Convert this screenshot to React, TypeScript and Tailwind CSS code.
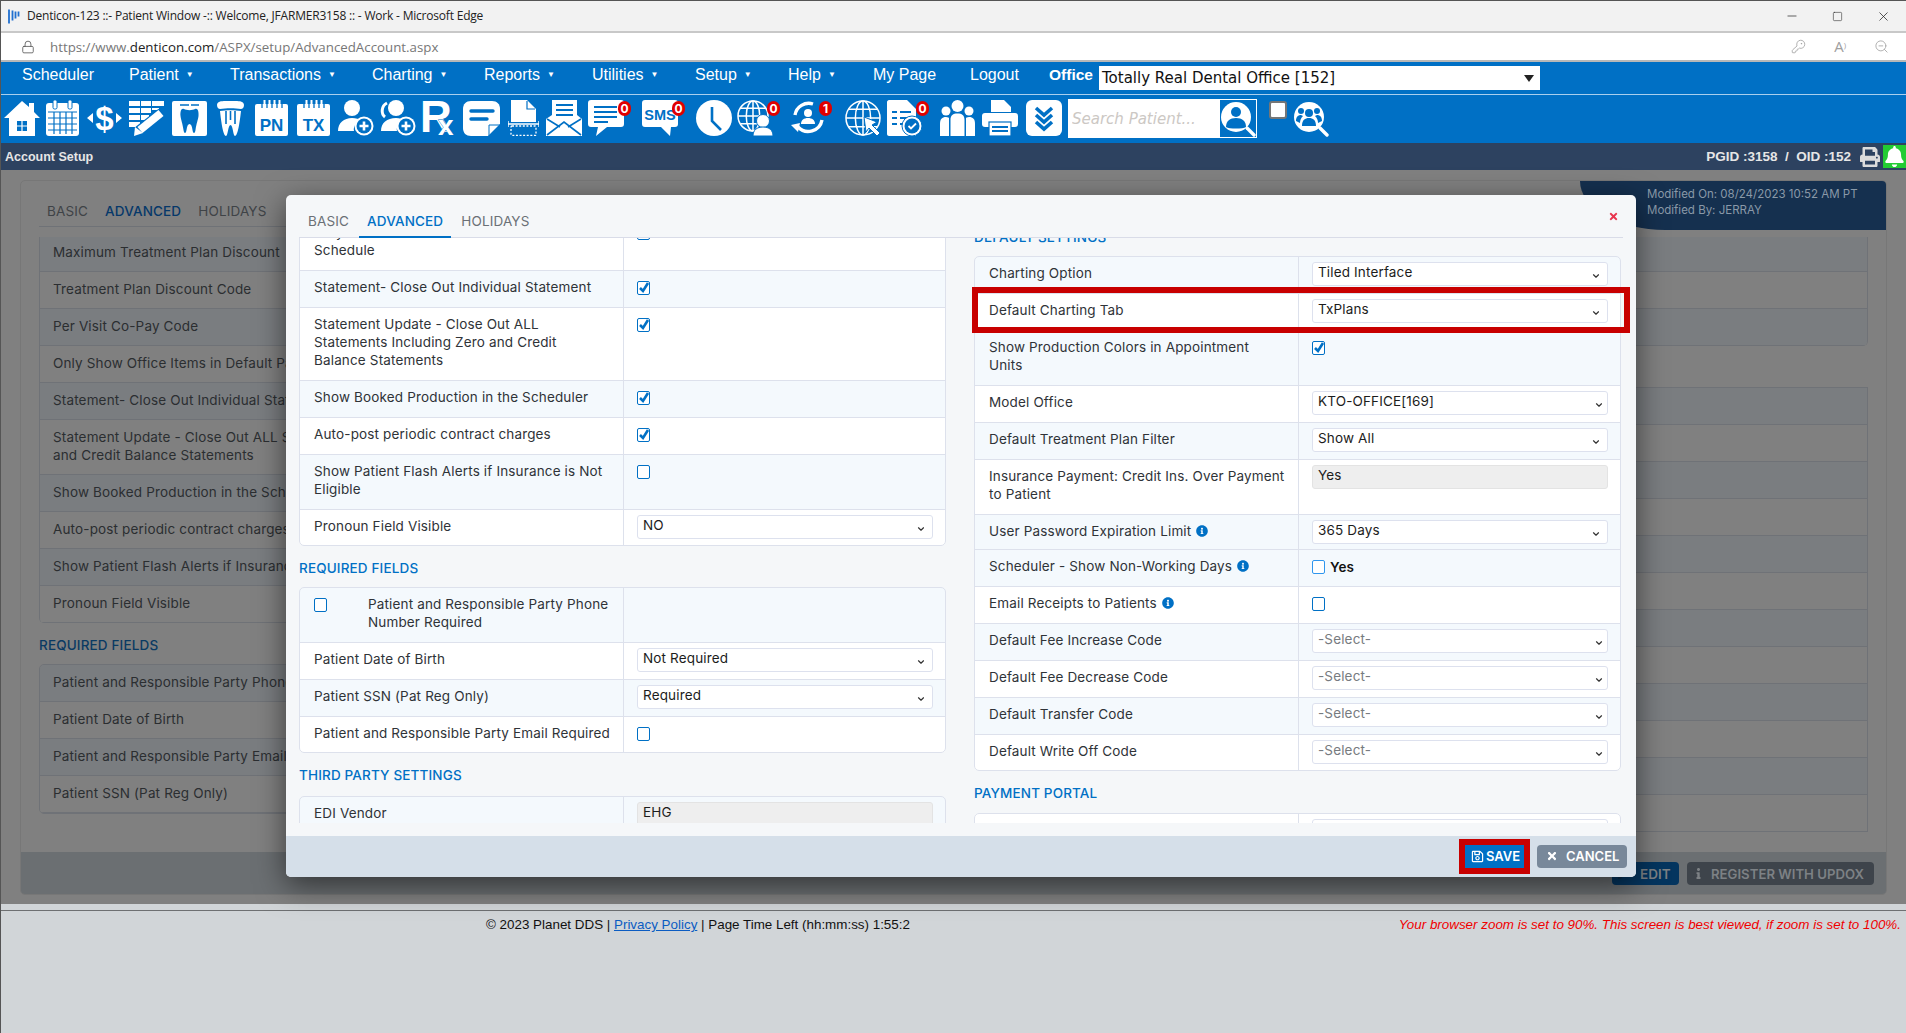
import type { ReactNode } from 'react';
import { ChevronDown, KeyRound, Lock, Minus, Square, X, ZoomOut } from 'lucide-react';
import { FaBell, FaInfo, FaInfoCircle, FaPen, FaPrint, FaRegSave, FaTimes } from 'react-icons/fa';

const W = '#ffffff';
const B = '#0070c5';

// Toolbar slot, width and margin come from the caller
function Tool({ cls, badge, children }: { cls: string; badge?: string; children: ReactNode }) {
  return (
    <div className={`relative h-[36px] shrink-0 ${cls}`}>
      {children}
      {badge && (
        <span className="absolute right-[-7px] top-[1px] flex h-[15px] w-[13px] items-center justify-center rounded-full bg-[#e00000] text-[12px] font-bold leading-none text-white">
          {badge}
        </span>
      )}
    </div>
  );
}

const Svg = ({ w, children }: { w: number; children: ReactNode }) => (
  <svg viewBox={`0 0 ${w} 36`} width={w} height={36} className="block">
    {children}
  </svg>
);

const svgFont = 'Liberation Sans, Arial, sans-serif';

const HomeIcon = () => (
  <Svg w={36}>
    <path d="M18 1 L25 7 V3 H30 V12 L36 18 H31 V36 H5 V18 H0 Z" fill={W} />
    <rect x="13" y="21" width="10" height="10" fill={B} />
    <path d="M18 21 V31 M13 26 H23" stroke={W} strokeWidth="1.2" />
  </Svg>
);

const CalendarIcon = () => (
  <Svg w={33}>
    <rect x="0" y="3" width="33" height="33" rx="3" fill={W} />
    <rect x="7" y="0" width="4" height="9" rx="1.5" fill={W} stroke={B} />
    <rect x="22" y="0" width="4" height="9" rx="1.5" fill={W} stroke={B} />
    <path d="M2 12 H31 M2 18 H31 M2 24 H31 M2 30 H31 M8 12 V34 M14 12 V34 M20 12 V34 M26 12 V34" stroke={B} strokeWidth="1.2" />
  </Svg>
);

const DollarIcon = () => (
  <Svg w={35}>
    <text x="17.5" y="29.5" textAnchor="middle" fontFamily={svgFont} fontWeight="700" fontSize="33" fill={W}>$</text>
    <path d="M0 18 L6 13 V23 Z M35 18 L29 13 V23 Z" fill={W} />
  </Svg>
);

const GridPencilIcon = () => (
  <Svg w={36}>
    <path d="M0 1 H11 V6 H0 Z M12 1 H22 V6 H12 Z M23 1 H35 V6 H23 Z M0 8 H11 V13 H0 Z M12 8 H22 V13 H12 Z M23 8 H30 V10 H23 Z M0 15 H11 V20 H0 Z M12 15 H20 V20 H12 Z M0 22 H11 V27 H0 Z" fill={W} />
    <path d="M33 13 L10 31" stroke={B} strokeWidth="11" />
    <path d="M32 13 L11 30" stroke={W} strokeWidth="8" />
    <path d="M6 27 L14 33 L5 36 Z" fill={W} />
  </Svg>
);

const ToothCardIcon = () => (
  <Svg w={35}>
    <rect x="0" y="1" width="35" height="35" rx="2" fill={W} />
    <path d="M8 5 H17 M19 5 H27" stroke={B} strokeWidth="1.6" />
    <path d="M12 9 C9.5 7.5 8 11 8.5 16 C9 20 10.5 23 11.5 30 C12 34 14 34 14.5 30 C15 26 16 24 17.5 24 C19 24 20 26 20.5 30 C21 34 23 34 23.5 30 C24.5 23 26 20 26.5 16 C27 11 25.5 7.5 23 9 C20.5 10.5 14.5 10.5 12 9Z" fill={B} />
  </Svg>
);

const CrownToothIcon = () => (
  <Svg w={27}>
    <path d="M0 5 C0 0 8 1 13.5 1 C19 1 27 0 27 5 C27 8 25 9 24 9 C18 8 9 8 3 9 C2 9 0 8 0 5Z" fill={W} />
    <path d="M3 11 C4 20 6 36 9 36 C11 36 11 25 13.5 25 C16 25 16 36 18 36 C21 36 23 20 24 11 C18 10 9 10 3 11Z" fill={W} />
    <path d="M9 11 V24 M13.5 11 V20 M18 11 V24" stroke={B} strokeWidth="1.6" />
  </Svg>
);

const PadIcon = ({ text }: { text: string }) => (
  <Svg w={33}>
    <rect x="0" y="4" width="33" height="32" rx="2" fill={W} />
    <path d="M7 1 V8 M12 1 V8 M17 1 V8 M22 1 V8 M27 1 V8" stroke={B} strokeWidth="1.3" />
    <path d="M9.5 0 V6 M14.5 0 V6 M19.5 0 V6 M24.5 0 V6" stroke={W} strokeWidth="2" />
    <text x="16.5" y="31" textAnchor="middle" fontFamily={svgFont} fontWeight="700" fontSize="17" fill={B}>{text}</text>
  </Svg>
);

const UserPlusIcon = ({ extra }: { extra?: boolean }) => (
  <Svg w={36}>
    {extra && <path d="M7 3 C1 6 1 14 5 17" stroke={W} strokeWidth="3" fill="none" />}
    <circle cx={extra ? 16 : 14} cy="8" r="8" fill={W} />
    <path d={extra ? 'M1 31 C1 23 7 18 16 18 C20 18 22 19 24 20 C19 22 16 27 17 31 Z' : 'M0 31 C0 23 6 18 14 18 C18 18 21 19 23 20 C18 22 15 27 16 31 Z'} fill={W} />
    <circle cx="26" cy="26" r="9.5" fill={W} />
    <circle cx="26" cy="26" r="7.5" fill={B} />
    <path d="M26 21.5 V30.5 M21.5 26 H30.5" stroke={W} strokeWidth="2.6" />
  </Svg>
);

const RxIcon = () => (
  <Svg w={33}>
    <text x="-2" y="32" fontFamily={svgFont} fontWeight="700" fontSize="44" fill={W}>R</text>
    <text x="16" y="35" fontFamily={svgFont} fontWeight="700" fontSize="28" fill={W} stroke={B} strokeWidth="0.8" paintOrder="stroke">x</text>
  </Svg>
);

const NoteIcon = () => (
  <Svg w={37}>
    <path d="M8 1 H29 C34 1 37 4 37 9 V24 L25 36 H8 C3 36 0 33 0 28 V9 C0 4 3 1 8 1Z" fill={W} />
    <path d="M8 11 H30 M8 19 H24" stroke={B} strokeWidth="3.4" strokeLinecap="round" />
    <path d="M37 25 L26 25 L26 36" stroke={B} strokeWidth="1" fill="none" />
  </Svg>
);

const ScanIcon = () => (
  <Svg w={31}>
    <path d="M3 0 H19 L28 9 V22 H3 Z" fill={W} />
    <path d="M19 1 V9 H27" stroke={B} strokeWidth="1.2" fill="none" />
    <path d="M0 24 H31 M0 21 V27 M31 21 V27" stroke={W} strokeWidth="1.4" />
    <rect x="3" y="26" width="25" height="9.5" rx="1" fill="none" stroke={W} strokeWidth="1.3" strokeDasharray="2 1.6" />
  </Svg>
);

const MailIcon = () => (
  <Svg w={36}>
    <path d="M6 0 H31 V15 L36 19 V36 H0 V19 L6 15 Z" fill={W} />
    <path d="M10 5 H27 M10 10 H27 M10 15 H27" stroke={B} strokeWidth="2" />
    <path d="M1 19 L14 27 M35 19 L22 27 M1 35 L18 22 L35 35" stroke={B} strokeWidth="1.6" fill="none" />
  </Svg>
);

const MsgIcon = () => (
  <Svg w={36}>
    <path d="M3 0 H33 C35 0 36 1 36 3 V24 C36 26 35 27 33 27 H19 L8 36 L10 27 H3 C1 27 0 26 0 24 V3 C0 1 1 0 3 0Z" fill={W} />
    <path d="M6 7 H29 M6 12 H29 M6 17 H29 M6 22 H20" stroke={B} strokeWidth="2.2" />
  </Svg>
);

const SmsIcon = () => (
  <Svg w={36}>
    <path d="M3 0 H33 C35 0 36 1 36 3 V24 C36 26 35 27 33 27 H29 L28 36 L19 27 H3 C1 27 0 26 0 24 V3 C0 1 1 0 3 0Z" fill={W} />
    <text x="18" y="20" textAnchor="middle" fontFamily={svgFont} fontWeight="700" fontSize="14.5" fill={B}>SMS</text>
  </Svg>
);

const ClockIcon = () => (
  <Svg w={36}>
    <circle cx="18" cy="18" r="18" fill={W} />
    <path d="M16 7 V21 L25 30" stroke={B} strokeWidth="2.6" fill="none" />
  </Svg>
);

const Globe = ({ r = 15 }: { r?: number }) => (
  <g stroke={W} strokeWidth="1.5" fill="none">
    <circle cx={r + 1} cy={r + 1} r={r} />
    <ellipse cx={r + 1} cy={r + 1} rx={r * 0.45} ry={r} />
    <path d={`M1 ${r + 1} H${2 * r + 1} M${r + 1} 1 V${2 * r + 1} M3.5 ${r * 0.55} H${2 * r - 1.5} M3.5 ${r * 1.45 + 2} H${2 * r - 1.5}`} />
  </g>
);

const GlobeUserIcon = () => (
  <Svg w={36}>
    <Globe />
    <circle cx="26" cy="21" r="6.5" fill={W} stroke={B} />
    <path d="M16 36 C16 30 20 27 26 27 C32 27 36 30 36 36 Z" fill={W} stroke={B} />
  </Svg>
);

const RefreshUserIcon = () => (
  <Svg w={34}>
    <path d="M7 27 A14 14 0 0 0 31 20 M4 15 A14 14 0 0 1 22 4" stroke={W} strokeWidth="3.4" fill="none" />
    <path d="M0 25 L9 23 L7 32 Z" fill={W} />
    <circle cx="17" cy="13" r="4" fill={W} />
    <path d="M10 24 C10 20 13 18 17 18 C21 18 24 20 24 24 Z" fill={W} />
  </Svg>
);

const GlobeCursorIcon = () => (
  <Svg w={36}>
    <Globe r={17} />
    <path d="M19 17 L32 22 L27 25 L35 33 L32 36 L24 28 L21 32 Z" fill={W} stroke={B} />
  </Svg>
);

const DocCheckIcon = () => (
  <Svg w={35}>
    <path d="M2 0 H20 L29 9 V36 H2 C1 36 0 35 0 34 V2 C0 1 1 0 2 0Z" fill={W} />
    <path d="M5 12 H10 M13 12 H24 M5 18 H10 M13 18 H24 M5 24 H10 M13 24 H18" stroke={B} strokeWidth="2" />
    <circle cx="25" cy="26" r="10" fill={W} stroke={B} />
    <circle cx="25" cy="26" r="7.5" fill={B} />
    <path d="M21.5 26 L24 28.5 L29 23.5" stroke={W} strokeWidth="1.8" fill="none" />
  </Svg>
);

const PeopleIcon = () => (
  <Svg w={35}>
    <circle cx="6" cy="11" r="4.5" fill={W} />
    <circle cx="29" cy="11" r="4.5" fill={W} />
    <circle cx="17.5" cy="6" r="6" fill={W} />
    <path d="M0 36 V24 C0 19 2 17 6 17 C8 17 9 18 9 18 V36 Z M26 36 V18 C26 18 27 17 29 17 C33 17 35 19 35 24 V36 Z M10.5 36 V20 C10.5 15 13 13.5 17.5 13.5 C22 13.5 24.5 15 24.5 20 V36 Z" fill={W} />
  </Svg>
);

const PrinterIcon = () => (
  <Svg w={36}>
    <path d="M9 0 H22 L29 7 V12 H9 Z" fill={W} />
    <rect x="0" y="13" width="36" height="14" rx="3" fill={W} />
    <rect x="7" y="22" width="22" height="14" fill={W} stroke={B} strokeWidth="1.2" />
    <path d="M10 27 H26 M10 31 H26" stroke={B} strokeWidth="2" />
  </Svg>
);

const ChevronsIcon = () => (
  <Svg w={36}>
    <rect x="0" y="0" width="36" height="36" rx="6" fill={W} />
    <path d="M10 8 L18 15 L26 8 M10 15 L18 22 L26 15 M10 22 L18 29 L26 22" stroke={B} strokeWidth="3.6" fill="none" />
  </Svg>
);

const Lens = ({ children }: { children: ReactNode }) => (
  <Svg w={36}>
    <circle cx="16" cy="16" r="15" fill={W} />
    <path d="M27 27 L34 34" stroke={W} strokeWidth="3.4" strokeLinecap="round" />
    {children}
  </Svg>
);

function Chk({ checked, light }: { checked?: boolean; light?: boolean }) {
  return (
    <span className={`relative block h-[14px] w-[13px] shrink-0 rounded-[2px] border bg-white ${light ? 'border-[#2f96ee]' : 'border-[#0070c5]'}`}>
      {checked && (
        <svg viewBox="0 0 13 14" className="absolute left-[-1px] top-[-1px] h-[14px] w-[13px]">
          <path d="M3 7 L6 10 L11 2" stroke="#0070c5" strokeWidth="2.6" fill="none" />
        </svg>
      )}
    </span>
  );
}

function Sel({ value, muted, nudge }: { value: string; muted?: boolean; nudge?: boolean }) {
  return (
    <div className="relative h-[24px] w-[296px] rounded-[3px] border border-[#dde1ee] bg-white pl-[5px] text-[13.5px] leading-[19px]">
      <span className={muted ? 'text-[#777b80]' : 'text-[#1c1c1c]'}>{value}</span>
      <ChevronDown
        size={10}
        strokeWidth={2.8}
        className={`absolute top-[8px] text-[#333] ${nudge ? 'right-[3px]' : 'right-[6px]'}`}
      />
    </div>
  );
}

const ReadOnly = ({ value }: { value: string }) => (
  <div className="h-[24px] w-[296px] rounded-[3px] border border-[#e3e3e3] bg-[#eeeeee] pl-[5px] text-[13.5px] leading-[19px] text-[#1c1c1c]">
    {value}
  </div>
);

function Row({ label, h = 'h-[37px]', blue, first, boxTop, selTop, children }: {
  label: ReactNode;
  h?: string;
  blue?: boolean;
  first?: boolean;
  boxTop?: boolean;
  selTop?: boolean;
  children?: ReactNode;
}) {
  const valueTop = boxTop ? (first ? 'pt-[11px]' : 'pt-[10px]') : selTop ? (first ? 'pt-[6px]' : 'pt-[5px]') : '';
  return (
    <div className={`grid grid-cols-[325px_1fr] ${h} ${first ? '' : 'border-t border-[#dde1ec]'} ${blue ? 'bg-[#f4f9fd]' : 'bg-white'}`}>
      <div className={`border-r border-[#dde1ec] pl-[15px] pr-[10px] text-[#2f3338] ${first ? 'pt-[8px]' : 'pt-[7px]'}`}>{label}</div>
      <div className={`pl-[13px] ${valueTop}`}>{children}</div>
    </div>
  );
}

const Info = () => <FaInfoCircle size={12} className="ml-[5px] inline-block align-[-1px] text-[#0070c5]" />;

const Heading = ({ children }: { children: ReactNode }) => (
  <div className="h-[41px] pt-[13px] text-[13.5px] font-medium uppercase leading-[18px] text-[#0070c5]">{children}</div>
);

// The outline sits on the rows instead of adding to the height
const Table = ({ children }: { children: ReactNode }) => (
  <div className="overflow-hidden rounded-[5px] outline-1 -outline-offset-1 outline-[#dde1ec]">{children}</div>
);

function BackdropRow({ label, h = 'h-[37px]', blue, tight }: { label?: ReactNode; h?: string; blue?: boolean; tight?: boolean }) {
  return (
    <div className={`border-b border-[#6f7277] pl-[13px] text-[#2b2e31] ${tight ? 'pt-[6px]' : 'pt-[8px]'} ${h} ${blue ? 'bg-[#7a7d80]' : 'bg-[#808080]'}`}>
      {label}
    </div>
  );
}

const navItem = 'flex items-center gap-[7px]';
const caret = <span className="text-[8px] leading-none">▼</span>;

export default function App() {
  return (
    <div className="flex h-screen w-full flex-col overflow-hidden border-l border-[#555] bg-[#d1d5d8] font-['Inter',sans-serif] text-[13.5px] leading-[18px]">
      {/* Window title */}
      <div className="flex h-[31px] shrink-0 items-center border-t border-[#555] bg-[#f2f2f2] pl-[7px] text-[#222]">
        <svg viewBox="0 0 12 14" className="h-[15px] w-[12px]">
          <path d="M1 0 V14 M4.5 1 V11 M7.5 2 V9 M10.5 2 V7" stroke="#1f6fd0" strokeWidth="1.8" />
        </svg>
        <span className="ml-[7px] font-['Open_Sans',sans-serif] text-[12px] tracking-[-0.2px]">
          Denticon-123 ::- Patient Window -:: Welcome, JFARMER3158 :: - Work - Microsoft Edge
        </span>
        <div className="ml-auto flex items-center gap-[33px] pr-[15px] text-[#222]">
          <Minus size={14} strokeWidth={1.2} />
          <Square size={11} strokeWidth={1.2} />
          <X size={15} strokeWidth={1.2} />
        </div>
      </div>

      {/* Address bar */}
      <div className="flex h-[31px] shrink-0 items-center border-y-2 border-t-[#c8c8c8] border-b-[#b8b8b8] bg-white pl-[20px]">
        <Lock size={14} strokeWidth={1.4} className="text-[#555]" />
        <span className="ml-[15px] font-['Open_Sans',sans-serif] text-[13.3px] text-[#777]">
          https://www.<span className="text-[#222]">denticon.com</span>/ASPX/setup/AdvancedAccount.aspx
        </span>
        <div className="ml-auto flex items-center gap-[28px] pr-[17px] text-[#a0a0a0]">
          <KeyRound size={15} strokeWidth={1.3} />
          <span className="font-['Open_Sans',sans-serif] text-[15px] leading-none">A<sup className="text-[8px]">)</sup></span>
          <ZoomOut size={15} strokeWidth={1.3} />
        </div>
      </div>

      {/* Menu */}
      <div className="flex h-[33px] shrink-0 items-center border-b border-[#a9cfee] bg-[#0070c5] pl-[21px] font-['Liberation_Sans',Arial,sans-serif] text-[16px] text-white">
        <div className="flex items-center pb-[6px]">
          <span className="w-[107px]">Scheduler</span>
          <span className={`${navItem} w-[101px]`}>Patient {caret}</span>
          <span className={`${navItem} w-[142px]`}>Transactions {caret}</span>
          <span className={`${navItem} w-[112px]`}>Charting {caret}</span>
          <span className={`${navItem} w-[108px]`}>Reports {caret}</span>
          <span className={`${navItem} w-[103px]`}>Utilities {caret}</span>
          <span className={`${navItem} w-[93px]`}>Setup {caret}</span>
          <span className={`${navItem} w-[85px]`}>Help {caret}</span>
          <span className="w-[97px]">My Page</span>
          <span className="w-[79px]">Logout</span>
          <span className="w-[50px] text-[15.5px] font-bold">Office</span>
        </div>
        <div className="flex h-[24px] w-[441px] items-center justify-between bg-white pl-[3px] pr-[6px] font-['DejaVu_Sans',sans-serif] text-[15px] text-[#111]">
          <span>Totally Real Dental Office [152]</span>
          <svg viewBox="0 0 10 7" className="h-[7px] w-[10px]">
            <path d="M0 0 H10 L5 7 Z" fill="#222" />
          </svg>
        </div>
      </div>

      {/* Icon toolbar */}
      <div className="flex h-[48px] shrink-0 items-start bg-[#0070c5] pl-[3px] pt-[5px]">
        <Tool cls="w-[36px]"><HomeIcon /></Tool>
        <Tool cls="ml-[6px] w-[33px]"><CalendarIcon /></Tool>
        <Tool cls="ml-[8px] w-[35px]"><DollarIcon /></Tool>
        <Tool cls="ml-[7px] w-[36px]"><GridPencilIcon /></Tool>
        <Tool cls="ml-[7px] w-[35px]"><ToothCardIcon /></Tool>
        <Tool cls="ml-[10px] w-[27px]"><CrownToothIcon /></Tool>
        <Tool cls="ml-[11px] w-[33px]"><PadIcon text="PN" /></Tool>
        <Tool cls="ml-[9px] w-[33px]"><PadIcon text="TX" /></Tool>
        <Tool cls="ml-[8px] w-[36px]"><UserPlusIcon /></Tool>
        <Tool cls="ml-[6px] w-[36px]"><UserPlusIcon extra /></Tool>
        <Tool cls="ml-[6px] w-[33px]"><RxIcon /></Tool>
        <Tool cls="ml-[8px] w-[37px]"><NoteIcon /></Tool>
        <Tool cls="ml-[8px] w-[31px]"><ScanIcon /></Tool>
        <Tool cls="ml-[7px] w-[36px]"><MailIcon /></Tool>
        <Tool cls="ml-[6px] w-[36px]" badge="0"><MsgIcon /></Tool>
        <Tool cls="ml-[18px] w-[36px]" badge="0"><SmsIcon /></Tool>
        <Tool cls="ml-[18px] w-[36px]"><ClockIcon /></Tool>
        <Tool cls="ml-[5px] w-[36px]" badge="0"><GlobeUserIcon /></Tool>
        <Tool cls="ml-[18px] w-[34px]" badge="1"><RefreshUserIcon /></Tool>
        <Tool cls="ml-[20px] w-[36px]"><GlobeCursorIcon /></Tool>
        <Tool cls="ml-[6px] w-[35px]" badge="0"><DocCheckIcon /></Tool>
        <Tool cls="ml-[18px] w-[35px]"><PeopleIcon /></Tool>
        <Tool cls="ml-[7px] w-[36px]"><PrinterIcon /></Tool>
        <Tool cls="ml-[8px] w-[36px]"><ChevronsIcon /></Tool>
        <div className="-mt-[1px] ml-[6px] flex h-[39px] w-[189px] shrink-0 border border-white bg-white">
          <input
            readOnly
            placeholder="Search Patient..."
            className="w-[151px] bg-white pl-[3px] font-['DejaVu_Sans',sans-serif] text-[15px] italic outline-none placeholder:text-[#ccc8c4]"
          />
          <div className="h-full w-[36px] bg-[#0070c5] pt-[1px]">
            <Lens>
              <circle cx="16" cy="11" r="5" fill={B} />
              <path d="M6 26 C6 20 10 17 16 17 C22 17 26 20 26 26 C23 28 9 28 6 26Z" fill={B} />
            </Lens>
          </div>
        </div>
        <span className="ml-[12px] mt-[1px] block h-[18px] w-[18px] shrink-0 rounded-[3px] border-2 border-[#767676] bg-white" />
        <div className="ml-[6px] mt-[1px]">
          <Tool cls="w-[36px]">
            <Lens>
              <circle cx="16" cy="12" r="4" fill={B} />
              <circle cx="8" cy="10" r="3" fill={B} />
              <circle cx="24" cy="10" r="3" fill={B} />
              <path d="M9 25 C9 19 12 17 16 17 C20 17 23 19 23 25 Z M3 20 C3 16 5 14 8 14 L10 15 C8 17 7 19 7 22 Z M29 20 C29 16 27 14 24 14 L22 15 C24 17 25 19 25 22 Z" fill={B} />
            </Lens>
          </Tool>
        </div>
      </div>

      {/* Page title bar */}
      <div className="flex h-[27px] shrink-0 items-center bg-[#2d4260] pl-[4px] font-['Liberation_Sans',Arial,sans-serif] text-[12.5px] font-bold text-[#e6e6e6]">
        <span>Account Setup</span>
        <span className="ml-auto text-[13.5px]">PGID :3158&nbsp; /&nbsp; OID :152</span>
        <FaPrint size={20} className="ml-[9px] text-[#dcdcdc]" />
        <div className="ml-[3px] flex h-[23px] w-[23px] items-center justify-center bg-[#22cc33]">
          <FaBell size={21} className="text-white" />
        </div>
      </div>

      {/* Dimmed page behind the dialog */}
      <div className="h-[734px] shrink-0 overflow-hidden bg-[#808080] pl-[19px] pr-[19px] pt-[10px] tracking-[0.15px]">
        <div className="relative flex h-[715px] flex-col overflow-hidden rounded-[5px] border border-[#777] bg-[#808080]">
          <div className="absolute right-0 top-0 h-[49px] w-[306px] rounded-bl-[85px_49px] bg-[#15304f] pl-[67px] pt-[5px] text-[11.5px] leading-[16px] tracking-normal text-[#8a99a8]">
            Modified On: 08/24/2023 10:52 AM PT
            <br />
            Modified By: JERRAY
          </div>
          <div className="mx-[18px] flex h-[46px] shrink-0 items-end gap-[17px] border-b border-[#6f7277] pb-[6px] pl-[8px] uppercase text-[#3f4347]">
            <span>Basic</span>
            <span className="font-medium text-[#06386a]">Advanced</span>
            <span>Holidays</span>
          </div>
          <div className="grid min-h-0 flex-1 grid-cols-[895px_895px] justify-between overflow-hidden px-[18px] pt-[10px]">
            <div>
              <div className="overflow-hidden rounded-b-[5px] border-x border-[#6f7277]">
                <BackdropRow label="Maximum Treatment Plan Discount" h="h-[35px]" blue tight />
                <BackdropRow label="Treatment Plan Discount Code" />
                <BackdropRow label="Per Visit Co-Pay Code" blue />
                <BackdropRow label="Only Show Office Items in Default Pay Schedule" />
                <BackdropRow label="Statement- Close Out Individual Statement" blue />
                <BackdropRow label={<>Statement Update - Close Out ALL Statements Including Zero<br />and Credit Balance Statements</>} h="h-[55px]" />
                <BackdropRow label="Show Booked Production in the Scheduler" blue />
                <BackdropRow label="Auto-post periodic contract charges" />
                <BackdropRow label="Show Patient Flash Alerts if Insurance is Not Eligible" blue />
                <BackdropRow label="Pronoun Field Visible" h="h-[37px]" />
              </div>
              <div className="h-[41px] pt-[13px] font-medium text-[#0a3a63]">REQUIRED FIELDS</div>
              <div className="overflow-hidden rounded-[5px] border border-[#6f7277]">
                <BackdropRow label="Patient and Responsible Party Phone Number Required" blue />
                <BackdropRow label="Patient Date of Birth" />
                <BackdropRow label="Patient and Responsible Party Email Required" blue />
                <BackdropRow label="Patient SSN (Pat Reg Only)" />
              </div>
            </div>
            <div>
              <div className="overflow-hidden rounded-b-[5px] border-x border-[#6f7277]">
                <BackdropRow h="h-[35px]" blue />
                <BackdropRow />
                <BackdropRow blue />
              </div>
              <div className="h-[41px]" />
              <div className="border-x border-t border-[#6f7277]">
                <BackdropRow blue />
                <BackdropRow />
                <BackdropRow blue />
                <BackdropRow />
                <BackdropRow blue />
                <BackdropRow />
                <BackdropRow blue />
                <BackdropRow />
                <BackdropRow blue />
                <BackdropRow />
                <BackdropRow blue />
                <BackdropRow />
              </div>
            </div>
          </div>
          <div className="flex h-[42px] shrink-0 items-start justify-end gap-[8px] bg-[#6b6f72] pr-[12px] pt-[10px] font-semibold uppercase tracking-normal text-[#7d8185]">
            <span className="flex h-[23px] w-[67px] items-center gap-[12px] rounded-[4px] bg-[#04355f] pl-[6px]">
              <FaPen size={10} className="text-[#0b2b49]" />
              Edit
            </span>
            <span className="flex h-[23px] w-[187px] items-center gap-[7px] whitespace-nowrap rounded-[4px] bg-[#3e444b] pl-[6px] text-[13.2px]">
              <FaInfo size={11} />
              Register with Updox
            </span>
          </div>
        </div>
      </div>

      {/* Footer */}
      <div className="relative min-h-0 flex-1 bg-[#d1d5d8] font-['Liberation_Sans',Arial,sans-serif] text-[13.4px]">
        <div className="mt-[6px] h-[1px] bg-[#6e7072]" />
        <div className="flex pt-[5px]">
          <div className="ml-[485px] text-[#111]">
            © 2023 Planet DDS | <span className="text-[#0b5cc2] underline">Privacy Policy</span> | Page Time Left (hh:mm:ss) 1:55:2
          </div>
          <div className="ml-auto pr-[5px] italic text-[#f00000]">
            Your browser zoom is set to 90%. This screen is best viewed, if zoom is set to 100%.
          </div>
        </div>
      </div>

      {/* Modal dialog */}
      <div className="absolute left-[286px] top-[195px] flex h-[682px] w-[1350px] flex-col overflow-hidden rounded-[5px] bg-[#f5f7f9] tracking-[0.15px] shadow-[0_8px_30px_rgba(0,0,0,0.55)]">
        <div className="relative mx-[13px] flex h-[43px] shrink-0 items-end gap-[18px] border-b border-[#d9dce8] pb-[7px] pl-[9px] uppercase text-[#6b7076]">
          <span>Basic</span>
          <span className="relative font-medium text-[#0070c5]">
            Advanced
            <span className="absolute bottom-[-8px] left-[-8px] right-[-8px] h-[2px] bg-[#0070c5]" />
          </span>
          <span>Holidays</span>
          <FaTimes size={11} className="absolute right-[4px] top-[16px] text-[#e8354e]" />
        </div>

        <div className="h-[585px] shrink-0 overflow-hidden">
          <div className="-mt-[23px] grid grid-cols-[647px_647px] gap-[28px] pl-[13px]">
            {/* Left settings column */}
            <div>
              <Table>
                <Row label={<>Only Show Office Items in Default<br />Schedule</>} h="h-[55px]" first boxTop><Chk /></Row>
                <Row label="Statement- Close Out Individual Statement" blue boxTop><Chk checked /></Row>
                <Row label={<>Statement Update - Close Out ALL<br />Statements Including Zero and Credit<br />Balance Statements</>} h="h-[73px]" boxTop><Chk checked /></Row>
                <Row label="Show Booked Production in the Scheduler" blue boxTop><Chk checked /></Row>
                <Row label="Auto-post periodic contract charges" boxTop><Chk checked /></Row>
                <Row label={<>Show Patient Flash Alerts if Insurance is Not<br />Eligible</>} h="h-[55px]" blue boxTop><Chk /></Row>
                <Row label="Pronoun Field Visible" selTop><Sel value="NO" /></Row>
              </Table>

              <Heading>Required Fields</Heading>
              <Table>
                <div className="grid h-[55px] grid-cols-[325px_1fr] bg-[#f4f9fd]">
                  <div className="flex border-r border-[#dde1ec] pl-[15px] pt-[8px] text-[#2f3338]">
                    <span className="mt-[3px]"><Chk /></span>
                    <span className="ml-[41px]">Patient and Responsible Party Phone<br />Number Required</span>
                  </div>
                  <div />
                </div>
                <Row label="Patient Date of Birth" selTop><Sel value="Not Required" /></Row>
                <Row label="Patient SSN (Pat Reg Only)" blue selTop><Sel value="Required" /></Row>
                <Row label="Patient and Responsible Party Email Required" boxTop><Chk /></Row>
              </Table>

              <div className="mb-[2px]"><Heading>Third Party Settings</Heading></div>
              <Table>
                <Row label="EDI Vendor" first blue selTop><ReadOnly value="EHG" /></Row>
              </Table>
            </div>

            {/* Right settings column */}
            <div>
              <Heading>Default Settings</Heading>
              <Table>
                <Row label="Charting Option" first blue selTop><Sel value="Tiled Interface" /></Row>
                <Row label="Default Charting Tab" selTop><Sel value="TxPlans" /></Row>
                <Row label={<>Show Production Colors in Appointment<br />Units</>} h="h-[55px]" blue boxTop><Chk checked /></Row>
                <Row label="Model Office" selTop><Sel value="KTO-OFFICE[169]" nudge /></Row>
                <Row label="Default Treatment Plan Filter" blue selTop><Sel value="Show All" /></Row>
                <Row label={<>Insurance Payment: Credit Ins. Over Payment<br />to Patient</>} h="h-[55px]" selTop><ReadOnly value="Yes" /></Row>
                <Row label={<>User Password Expiration Limit<Info /></>} h="h-[35px]" blue selTop><Sel value="365 Days" /></Row>
                <Row label={<>Scheduler - Show Non-Working Days<Info /></>} blue>
                  <div className="flex h-full items-center gap-[5px] pb-[2px] font-semibold text-[#111]"><Chk light />Yes</div>
                </Row>
                <Row label={<>Email Receipts to Patients<Info /></>} boxTop><Chk /></Row>
                <Row label="Default Fee Increase Code" blue selTop><Sel value="-Select-" muted nudge /></Row>
                <Row label="Default Fee Decrease Code" selTop><Sel value="-Select-" muted nudge /></Row>
                <Row label="Default Transfer Code" blue selTop><Sel value="-Select-" muted nudge /></Row>
                <Row label="Default Write Off Code" selTop><Sel value="-Select-" muted nudge /></Row>
              </Table>

              <div className="mb-[1px]"><Heading>Payment Portal</Heading></div>
              <Table>
                <Row label="" first selTop><Sel value="" /></Row>
              </Table>
            </div>
          </div>
        </div>

        <div className="mt-auto flex h-[41px] shrink-0 items-center justify-end gap-[13px] bg-[#d5dfe9] pr-[9px] text-[13px] font-semibold uppercase tracking-normal text-white">
          <span className="flex h-[23px] w-[59px] items-center gap-[2px] bg-[#0070c5] pb-[1px] pl-[6px]">
            <FaRegSave size={13} />
            Save
          </span>
          <span className="flex h-[23px] w-[90px] items-center gap-[8px] rounded-[4px] bg-[#78889a] pb-[1px] pl-[9px]">
            <FaTimes size={12} />
            Cancel
          </span>
        </div>
      </div>

      {/* Red annotation boxes drawn on the screenshot */}
      <div className="pointer-events-none absolute left-[972px] top-[287px] h-[46px] w-[658px] border-[6px] border-[#c80000]" />
      <div className="pointer-events-none absolute left-[1459px] top-[839px] h-[35px] w-[71px] border-[6px] border-[#c80000]" />
    </div>
  );
}
